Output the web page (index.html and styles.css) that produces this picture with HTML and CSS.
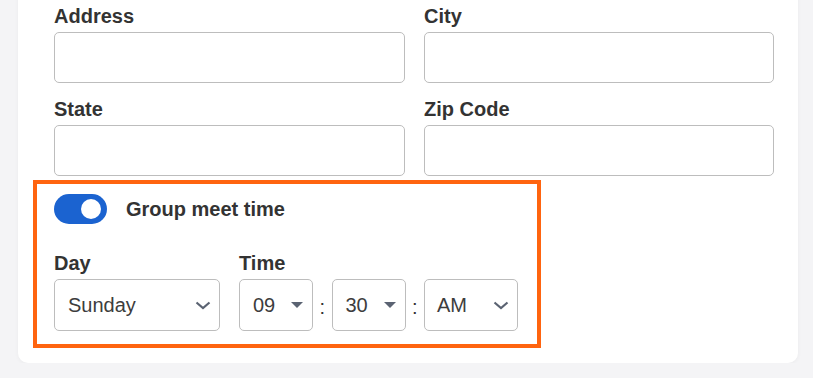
FILE: index.html
```html
<!DOCTYPE html>
<html lang="en">

<head>
    <meta charset="UTF-8">
    <meta name="viewport" content="width=device-width, initial-scale=1.0">
    <title>group details</title>
    <link rel="stylesheet" href="styles.css">
</head>

<body>
    <div class="card">
        <div class="grid">
            <div class="field">
                <label for="address">Address</label>
                <input type="text" id="address">
            </div>
            <div class="field">
                <label for="city">City</label>
                <input type="text" id="city">
            </div>
            <div class="field">
                <label for="state">State</label>
                <input type="text" id="state">
            </div>
            <div class="field">
                <label for="zip">Zip Code</label>
                <input type="text" id="zip">
            </div>
        </div>

        <div class="meet">
            <div class="toggle-row">
                <span class="toggle"><span class="knob"></span></span>
                <span class="toggle-label">Group meet time</span>
            </div>
            <div class="when">
                <div class="field">
                    <label>Day</label>
                    <div class="select day">
                        <span>Sunday</span>
                        <svg class="chevron" width="16" height="9" viewBox="0 0 16 9">
                            <path d="M1.5 1.5 L8 7 L14.5 1.5" fill="none" stroke="#5b6372" stroke-width="2.2" />
                        </svg>
                    </div>
                </div>
                <div class="field">
                    <label>Time</label>
                    <div class="time">
                        <div class="select small">
                            <span>09</span>
                            <svg class="caret" width="12" height="6" viewBox="0 0 12 6">
                                <path d="M0 0 H12 L6 6 Z" fill="#5b6372" />
                            </svg>
                        </div>
                        <span class="colon">:</span>
                        <div class="select small">
                            <span>30</span>
                            <svg class="caret" width="12" height="6" viewBox="0 0 12 6">
                                <path d="M0 0 H12 L6 6 Z" fill="#5b6372" />
                            </svg>
                        </div>
                        <span class="colon">:</span>
                        <div class="select ampm">
                            <span>AM</span>
                            <svg class="chevron" width="16" height="9" viewBox="0 0 16 9">
                                <path d="M1.5 1.5 L8 7 L14.5 1.5" fill="none" stroke="#5b6372" stroke-width="2.2" />
                            </svg>
                        </div>
                    </div>
                </div>
            </div>
        </div>
    </div>
</body>

</html>
```

FILE: styles.css
```css
body {
    margin: 0;
    background-color: #f4f4f6;
    font-family: "Liberation Sans", Arial, sans-serif;
    color: #333333;
}

.card {
    background-color: white;
    margin: -20px 15px 0 18px;
    width: 780px;
    box-sizing: border-box;
    padding: 25px 24px 15px 36px;
    border-radius: 0 0 10px 10px;
    box-shadow: 0 1px 4px rgba(0, 0, 0, 0.04);
}

.grid {
    display: grid;
    grid-template-columns: 351px 350px;
    column-gap: 19px;
    row-gap: 15px;
}

.field {
    display: flex;
    flex-direction: column;
}

.field label {
    font-size: 20px;
    font-weight: bold;
    line-height: 23px;
    margin-bottom: 4px;
}

.field input {
    height: 51px;
    box-sizing: border-box;
    border: 1px solid #bdbdbd;
    border-radius: 5px;
    margin: 0;
}

.meet {
    border: 4px solid #ff640f;
    width: 508px;
    box-sizing: border-box;
    margin: 4px 0 0 -21px;
    padding: 10px 17px 13px 17px;
}

.toggle-row {
    display: flex;
    align-items: center;
}

.toggle {
    width: 53px;
    height: 30px;
    border-radius: 15px;
    background-color: #1b63d0;
    display: flex;
    align-items: center;
    justify-content: flex-end;
    padding-right: 6px;
    box-sizing: border-box;
}

.knob {
    width: 20px;
    height: 20px;
    border-radius: 50%;
    background-color: white;
}

.toggle-label {
    font-size: 20px;
    font-weight: bold;
    margin-left: 19px;
}

.when {
    display: flex;
    gap: 19px;
    margin-top: 28px;
}

.select {
    height: 52px;
    box-sizing: border-box;
    border: 1px solid #bdbdbd;
    border-radius: 5px;
    display: flex;
    align-items: center;
    justify-content: space-between;
    font-size: 20px;
    color: #3d3d3d;
}

.day {
    width: 166px;
    padding: 0 8px 0 13px;
}

.small {
    width: 74px;
    padding: 0 9px 0 13px;
}

.ampm {
    width: 93.5px;
    padding: 0 8px 0 12px;
}

.time {
    display: flex;
    align-items: center;
}

.colon {
    font-size: 20px;
    width: 18.5px;
    text-align: center;
    padding-top: 4px;
}
```
